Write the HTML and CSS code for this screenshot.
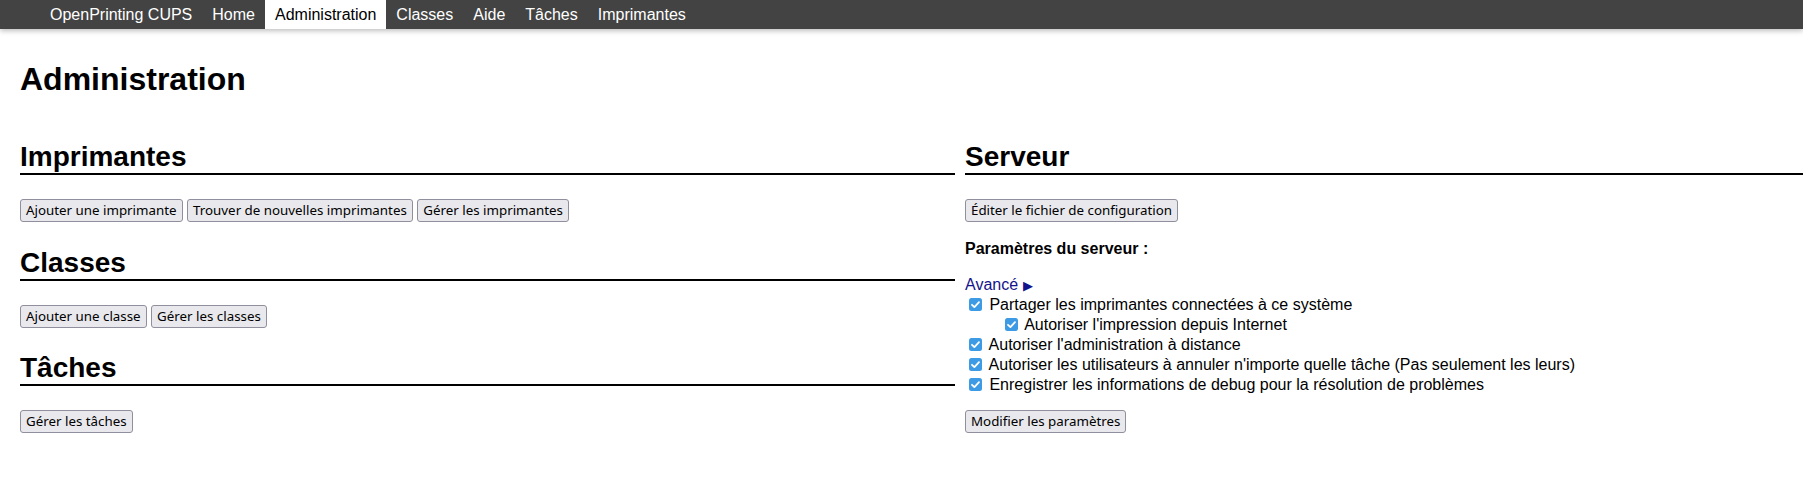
FILE: index.html
```html
<!DOCTYPE html>
<html lang="fr">
<head>
<meta charset="utf-8">
<title>Administration - CUPS</title>
<link rel="stylesheet" href="styles.css">
</head>
<body>
<div class="header">
  <ul class="nav">
    <li><a href="#">OpenPrinting CUPS</a></li>
    <li><a href="#">Home</a></li>
    <li><a href="#" class="active">Administration</a></li>
    <li><a href="#">Classes</a></li>
    <li><a href="#">Aide</a></li>
    <li><a href="#">Tâches</a></li>
    <li><a href="#">Imprimantes</a></li>
  </ul>
</div>
<div class="content">
  <h1 class="page-title">Administration</h1>
  <div class="row">
    <div class="col">
      <h2 class="title">Imprimantes</h2>
      <div class="actions">
        <button type="button" class="btn">Ajouter une imprimante</button>
        <button type="button" class="btn">Trouver de nouvelles imprimantes</button>
        <button type="button" class="btn">Gérer les imprimantes</button>
      </div>
      <h2 class="title">Classes</h2>
      <div class="actions">
        <button type="button" class="btn">Ajouter une classe</button>
        <button type="button" class="btn">Gérer les classes</button>
      </div>
      <h2 class="title">Tâches</h2>
      <div class="actions">
        <button type="button" class="btn">Gérer les tâches</button>
      </div>
    </div>
    <div class="col col-right">
      <h2 class="title">Serveur</h2>
      <div class="actions actions-edit">
        <button type="button" class="btn">Éditer le fichier de configuration</button>
      </div>
      <p class="settings-label"><b>Paramètres du serveur :</b></p>
      <p class="settings">
        <a href="#" class="advanced">Avancé <small class="arrow">&#x25b6;</small></a><br>
        <input type="checkbox" class="check" checked> Partager les imprimantes connectées à ce système<br>
        &nbsp;&nbsp;&nbsp;&nbsp;&nbsp;&nbsp;&nbsp;&nbsp;<input type="checkbox" class="check" checked> Autoriser l'impression depuis Internet<br>
        <input type="checkbox" class="check" checked> Autoriser l'administration à distance<br>
        <input type="checkbox" class="check" checked> Autoriser les utilisateurs à annuler n'importe quelle tâche (Pas seulement les leurs)<br>
        <input type="checkbox" class="check" checked> Enregistrer les informations de debug pour la résolution de problèmes
      </p>
      <div class="actions actions-last">
        <button type="button" class="btn">Modifier les paramètres</button>
      </div>
    </div>
  </div>
</div>
</body>
</html>
```

FILE: styles.css
```css
html, body {
  margin: 0;
  padding: 0;
  background: #ffffff;
  overflow: hidden;
}

body {
  font-family: "Liberation Sans", Arial, sans-serif;
  font-size: 16px;
  color: #000;
}

.header {
  position: relative;
  z-index: 2;
  height: 29px;
  background: #434343;
  box-shadow: 0 2px 5px rgba(0, 0, 0, 0.25);
}

.nav {
  list-style: none;
  margin: 0;
  padding: 0 0 0 40px;
  display: flex;
}

.nav a {
  display: block;
  padding: 0 10px;
  line-height: 29px;
  font-size: 16px;
  color: #ffffff;
  text-decoration: none;
}

.nav a.active {
  background: #ffffff;
  color: #000000;
}

.content {
  padding: 32px 0 0 20px;
}

.page-title {
  margin: 0 0 43px;
  font-size: 32px;
  font-weight: bold;
}

.row {
  display: grid;
  grid-template-columns: 935px 1fr;
  column-gap: 10px;
}

.title {
  margin: 0 0 24px;
  font-size: 28px;
  line-height: 32px;
  font-weight: bold;
  border-bottom: 2px solid #000;
}

.actions {
  display: flex;
  gap: 4.5px;
  margin: 0 0 24.5px;
}

.btn {
  appearance: none;
  box-sizing: border-box;
  height: 23px;
  margin: 0;
  padding: 1px 5px;
  font-family: "Noto Sans", sans-serif;
  font-size: 13.333px;
  line-height: 19px;
  color: #000;
  background: #e9e9ed;
  border: 1px solid #8f8f9d;
  border-radius: 3px;
}

.actions-edit {
  margin-bottom: 18px;
}

.settings-label {
  margin: 0 0 17.5px;
}

.settings {
  margin: 0 0 16px;
}

.advanced {
  color: #14148c;
  text-decoration: none;
}

.arrow {
  font-size: 13px;
}

.check {
  appearance: none;
  width: 13px;
  height: 13px;
  margin: 4px 3px 0 4px;
  border-radius: 2.5px;
  background-color: #3d9be6;
  background-image: url("data:image/svg+xml,%3Csvg xmlns='http://www.w3.org/2000/svg' viewBox='0 0 13 13'%3E%3Cpath d='M3 6.8 L5.4 9.1 L10 4.2' fill='none' stroke='white' stroke-width='1.8' stroke-linecap='round' stroke-linejoin='round'/%3E%3C/svg%3E");
  background-size: 13px 13px;
  vertical-align: -1px;
}

.actions-last {
  margin-top: 16.5px;
}
```
